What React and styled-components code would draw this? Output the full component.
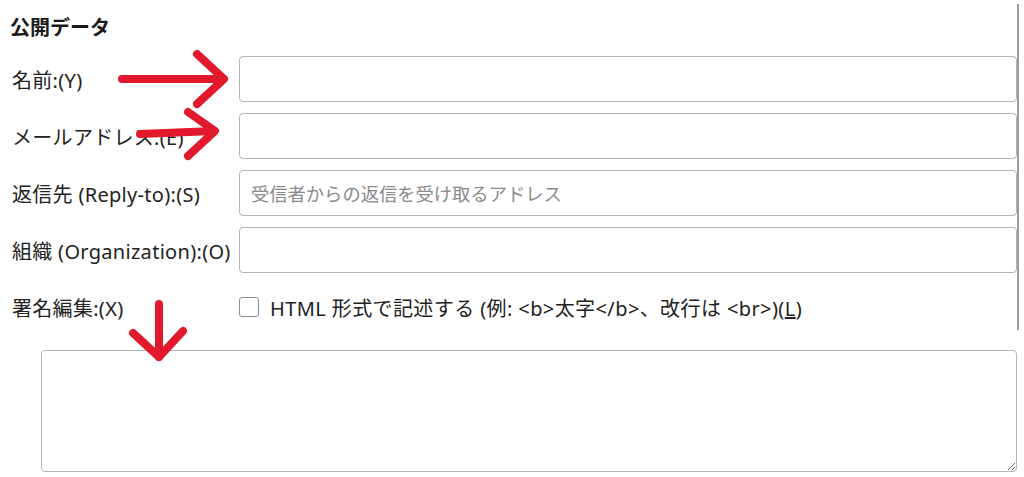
import React from "react";
import styled, { createGlobalStyle } from "styled-components";

const GlobalStyle = createGlobalStyle`
  html, body {
    margin: 0;
    padding: 0;
    background: #fff;
  }
  body {
    font-family: "Noto Sans", "Noto Sans CJK JP", sans-serif;
    color: #1f1f1f;
  }
`;

const fields = [
  { label: "名前:(Y)", placeholder: "" },
  { label: "メールアドレス:(E)", placeholder: "" },
  { label: "返信先 (Reply-to):(S)", placeholder: "受信者からの返信を受け取るアドレス" },
  { label: "組織 (Organization):(O)", placeholder: "" },
];

const App = () => {
  return (
    <Page>
      <GlobalStyle />
      <Section>
        <Heading>公開データ</Heading>
        <FormGrid>
          {fields.map((f) => (
            <React.Fragment key={f.label}>
              <Label>{f.label}</Label>
              <TextInput type="text" placeholder={f.placeholder} />
            </React.Fragment>
          ))}
          <Label>署名編集:(X)</Label>
          <CheckRow>
            <Checkbox type="checkbox" />
            <span>
              HTML 形式で記述する (例: &lt;b&gt;太字&lt;/b&gt;、改行は &lt;br&gt;)(<u>L</u>)
            </span>
          </CheckRow>
        </FormGrid>
      </Section>
      <Signature />
      <Annotations width="1024" height="477" viewBox="0 0 1024 477">
        <g stroke="#e2192c" strokeWidth="8" strokeLinecap="round" strokeLinejoin="round" fill="none">
          <path d="M122 79 L223 79" />
          <path d="M197 54 L224 79 L197 104" />
          <path d="M140 134 L214 131" />
          <path d="M188 112 L215 131 L188 156" />
          <path d="M159 304 L159 357" />
          <path d="M133 333 L159 357 L183 331" />
        </g>
      </Annotations>
    </Page>
  );
};

const Page = styled.div`
  position: relative;
  width: 1024px;
  height: 477px;
  padding: 4px 0 0 10px;
  box-sizing: border-box;
  overflow: hidden;
`;

const Section = styled.div`
  width: 1009px;
  padding-top: 9px;
  border-right: 2px solid #9c9c9c;
  box-sizing: border-box;
`;

const Heading = styled.h2`
  margin: 0 0 13px;
  font-size: 20px;
  line-height: 30px;
  font-weight: 700;
  color: #1a1a1a;
`;

const FormGrid = styled.div`
  display: grid;
  grid-template-columns: 229px 1fr;
  grid-auto-rows: 46px;
  row-gap: 11px;
  align-items: center;
`;

const Label = styled.label`
  padding-left: 2px;
  font-size: 20px;
  letter-spacing: 0.3px;
  white-space: nowrap;
  color: #222;
`;

const TextInput = styled.input`
  height: 46px;
  box-sizing: border-box;
  border: 1px solid #b5b5b5;
  border-radius: 4px;
  padding: 0 11px;
  font-family: inherit;
  font-size: 18.3px;
  outline: none;
  &::placeholder {
    color: #8a8a8a;
  }
`;

const CheckRow = styled.label`
  display: flex;
  align-items: center;
  gap: 11px;
  font-size: 20px;
  letter-spacing: 0.4px;
  color: #222;
  white-space: nowrap;
`;

const Checkbox = styled.input`
  appearance: none;
  margin: 0;
  width: 20px;
  height: 20px;
  border: 1px solid #8d8d8d;
  border-radius: 3px;
  background: #fff;
`;

const Signature = styled.textarea`
  display: block;
  margin: 20px 0 0 31px;
  width: 976px;
  height: 122px;
  box-sizing: border-box;
  border: 1px solid #b5b5b5;
  border-radius: 4px;
  outline: none;
  font-family: inherit;
`;

const Annotations = styled.svg`
  position: absolute;
  left: 0;
  top: 0;
  pointer-events: none;
`;

export default App;
